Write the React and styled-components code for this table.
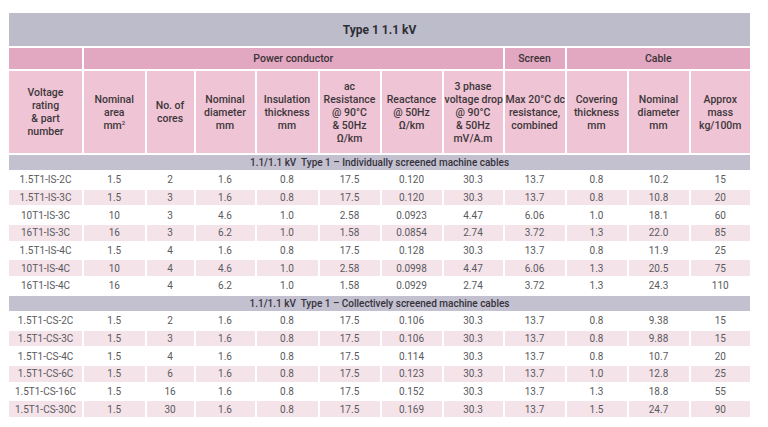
import styled, { createGlobalStyle } from "styled-components";

const GlobalStyle = createGlobalStyle`
  body {
    margin: 0;
    background: #ffffff;
    font-family: Roboto, "Liberation Sans", sans-serif;
  }
`;

const Page = styled.div`
  padding: 11px 0 0 7px;
`;

const Table = styled.table`
  table-layout: fixed;
  width: 745px;
  border-collapse: separate;
  border-spacing: 2px;
  color: #555;
`;

const TitleCell = styled.th`
  height: 33px;
  padding: 0;
  background: #bdbccb;
  color: #2e2e36;
  font-size: 12px;
  font-weight: 700;
  text-align: center;
`;

const GroupCell = styled.th`
  height: 21px;
  padding: 0;
  background: #e2a7c1;
  color: #3a3338;
  font-size: 10.5px;
  font-weight: 500;
  text-align: center;
`;

const HeadCell = styled.th`
  height: 82px;
  padding: 0 1px;
  background: #efc4d4;
  color: #3d373b;
  font-size: 10.5px;
  line-height: 13px;
  font-weight: 500;
  text-align: center;
  white-space: nowrap;
`;

const SectionCell = styled.td`
  height: 15px;
  padding: 0;
  background: #c3c0cf;
  color: #35323b;
  font-size: 10px;
  font-weight: 500;
  text-align: center;
  white-space: pre;
`;

const DataCell = styled.td`
  height: 15.7px;
  padding: 0;
  background: ${(p) => (p.$striped ? "#f5e3ea" : "#ffffff")};
  font-size: 10px;
  text-align: center;
  color: #5a5a5e;
`;

const Sup = styled.sup`
  font-size: 6px;
  line-height: 0;
  vertical-align: 4px;
`;

const widths = [73, 60.5, 47, 59, 61, 60, 60, 59, 60, 60, 60, 59.5];

const headers = [
  ["Voltage", "rating", "& part", "number"],
  ["Nominal", "area", "mm²"],
  ["No. of", "cores"],
  ["Nominal", "diameter", "mm"],
  ["Insulation", "thickness", "mm"],
  ["ac", "Resistance", "@ 90°C", "& 50Hz", "Ω/km"],
  ["Reactance", "@ 50Hz", "Ω/km"],
  ["3 phase", "voltage drop", "@ 90°C", "& 50Hz", "mV/A.m"],
  ["Max 20°C dc", "resistance,", "combined"],
  ["Covering", "thickness", "mm"],
  ["Nominal", "diameter", "mm"],
  ["Approx", "mass", "kg/100m"],
];

const sections = [
  {
    title: "1.1/1.1 kV  Type 1 – Individually screened machine cables",
    rows: [
      ["1.5T1-IS-2C", "1.5", "2", "1.6", "0.8", "17.5", "0.120", "30.3", "13.7", "0.8", "10.2", "15"],
      ["1.5T1-IS-3C", "1.5", "3", "1.6", "0.8", "17.5", "0.120", "30.3", "13.7", "0.8", "10.8", "20"],
      ["10T1-IS-3C", "10", "3", "4.6", "1.0", "2.58", "0.0923", "4.47", "6.06", "1.0", "18.1", "60"],
      ["16T1-IS-3C", "16", "3", "6.2", "1.0", "1.58", "0.0854", "2.74", "3.72", "1.3", "22.0", "85"],
      ["1.5T1-IS-4C", "1.5", "4", "1.6", "0.8", "17.5", "0.128", "30.3", "13.7", "0.8", "11.9", "25"],
      ["10T1-IS-4C", "10", "4", "4.6", "1.0", "2.58", "0.0998", "4.47", "6.06", "1.3", "20.5", "75"],
      ["16T1-IS-4C", "16", "4", "6.2", "1.0", "1.58", "0.0929", "2.74", "3.72", "1.3", "24.3", "110"],
    ],
  },
  {
    title: "1.1/1.1 kV  Type 1 – Collectively screened machine cables",
    rows: [
      ["1.5T1-CS-2C", "1.5", "2", "1.6", "0.8", "17.5", "0.106", "30.3", "13.7", "0.8", "9.38", "15"],
      ["1.5T1-CS-3C", "1.5", "3", "1.6", "0.8", "17.5", "0.106", "30.3", "13.7", "0.8", "9.88", "15"],
      ["1.5T1-CS-4C", "1.5", "4", "1.6", "0.8", "17.5", "0.114", "30.3", "13.7", "0.8", "10.7", "20"],
      ["1.5T1-CS-6C", "1.5", "6", "1.6", "0.8", "17.5", "0.123", "30.3", "13.7", "1.0", "12.8", "25"],
      ["1.5T1-CS-16C", "1.5", "16", "1.6", "0.8", "17.5", "0.152", "30.3", "13.7", "1.3", "18.8", "55"],
      ["1.5T1-CS-30C", "1.5", "30", "1.6", "0.8", "17.5", "0.169", "30.3", "13.7", "1.5", "24.7", "90"],
    ],
  },
];

const HeaderLines = ({ lines }) =>
  lines.map((line, i) => (
    <span key={i}>
      {i > 0 && <br />}
      {line === "mm²" ? (
        <>
          mm<Sup>2</Sup>
        </>
      ) : (
        line
      )}
    </span>
  ));

const App = () => {
  return (
    <Page>
      <GlobalStyle />
      <Table>
        <colgroup>
          {widths.map((w, i) => (
            <col key={i} style={{ width: w }} />
          ))}
        </colgroup>
        <thead>
          <tr>
            <TitleCell colSpan={12}>Type 1 1.1 kV</TitleCell>
          </tr>
          <tr>
            <GroupCell />
            <GroupCell colSpan={7}>Power conductor</GroupCell>
            <GroupCell>Screen</GroupCell>
            <GroupCell colSpan={3}>Cable</GroupCell>
          </tr>
          <tr>
            {headers.map((lines, i) => (
              <HeadCell key={i}>
                <HeaderLines lines={lines} />
              </HeadCell>
            ))}
          </tr>
        </thead>
        {sections.map((section) => (
          <tbody key={section.title}>
            <tr>
              <SectionCell colSpan={12}>{section.title}</SectionCell>
            </tr>
            {section.rows.map((row, r) => (
              <tr key={row[0]}>
                {row.map((value, c) => (
                  <DataCell key={c} $striped={r % 2 === 1}>
                    {value}
                  </DataCell>
                ))}
              </tr>
            ))}
          </tbody>
        ))}
      </Table>
    </Page>
  );
};

export default App;
